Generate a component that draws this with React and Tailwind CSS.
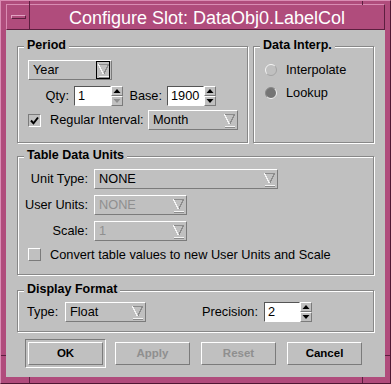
import React from 'react';

const raised = 'border border-t-white border-l-white border-r-[#7b7b7b] border-b-[#7b7b7b]';
const sunken = 'border border-t-[#7b7b7b] border-l-[#7b7b7b] border-r-white border-b-white';

function ComboGlyph() {
  return (
    <svg width="11" height="15" viewBox="0 0 11 15" shapeRendering="crispEdges">
      <path d="M0.5 1.5 H10.5 L5.5 11.5" stroke="#8c8c8c" fill="none" />
      <path d="M0.5 1.5 L5.5 11.5" stroke="#f4f4f4" fill="none" />
      <path d="M0.5 13.5 H10.5" stroke="#f4f4f4" />
      <path d="M0.5 14.5 H10.5" stroke="#8c8c8c" />
    </svg>
  );
}

function Combo({ width, value, disabled, focus }) {
  return (
    <div className={`flex h-[20px] items-center justify-between bg-[#c0c0c0] pl-[4px] pr-[1px] ${raised} ${width}`}>
      <span className={disabled ? 'text-[#8f8f8f]' : 'text-black'}>{value}</span>
      <span className={`flex h-[18px] w-[14px] items-center justify-center ${focus ? 'border border-black' : ''}`}>
        <ComboGlyph />
      </span>
    </div>
  );
}

function Arrow({ up, dim }) {
  return (
    <div className={`flex h-[10px] w-[12px] items-center justify-center ${raised}`}>
      <svg width="10" height="8" viewBox="0 0 10 8">
        <polygon points={up ? '1.5,6 5,2 8.5,6' : '1.5,2 8.5,2 5,6'} fill={dim ? '#8f8f8f' : '#000'} />
      </svg>
    </div>
  );
}

function Spin({ width, value, downDim }) {
  return (
    <div className="flex items-center">
      <div className={`flex h-[20px] items-center bg-white pl-[3px] ${sunken} border-t-[#555] border-l-[#555] ${width}`}>
        {value}
      </div>
      <div className="flex flex-col">
        <Arrow up />
        <Arrow dim={downDim} />
      </div>
    </div>
  );
}

function Check({ on }) {
  return (
    <div className={`flex h-[13px] w-[13px] shrink-0 items-center justify-center ${on ? sunken : raised}`}>
      {on && (
        <svg width="11" height="11" viewBox="0 0 11 11">
          <path d="M2 5.5 L4.5 8.3 L9 2.5" stroke="#000" strokeWidth="2" fill="none" />
        </svg>
      )}
    </div>
  );
}

function Radio({ on }) {
  return (
    <svg width="14" height="14" viewBox="0 0 14 14" className="shrink-0">
      <circle cx="7" cy="7" r="5.5" fill={on ? '#757575' : '#c0c0c0'} />
      <path d="M3.1 10.9 A5.5 5.5 0 0 1 10.9 3.1" stroke={on ? '#8a8a8a' : '#f4f4f4'} fill="none" />
      <path d="M10.9 3.1 A5.5 5.5 0 0 1 3.1 10.9" stroke={on ? '#f4f4f4' : '#a4a4a4'} fill="none" />
    </svg>
  );
}

function Group({ title, className, children }) {
  return (
    <div className={`relative border border-[#888888] shadow-[inset_1px_1px_0_#fff,1px_1px_0_#fff] ${className}`}>
      <span className="absolute left-[6px] top-[-9px] bg-[#c0c0c0] px-[3px] text-[12.5px] font-bold leading-[15px]">
        {title}
      </span>
      {children}
    </div>
  );
}

function Btn({ label, disabled }) {
  return (
    <div
      className={`flex h-[23px] w-[75px] items-center justify-center bg-[#c0c0c0] text-[11.5px] font-bold ${raised} ${
        disabled ? 'text-[#8f8f8f]' : 'text-black'
      }`}
    >
      {label}
    </div>
  );
}

export default function App() {
  return (
    <div className="relative flex h-[384px] w-[391px] flex-col border border-t-[#d98cb3] border-l-[#d98cb3] border-r-[#4f1733] border-b-[#4f1733] bg-[#b04c7c] pt-[3px] pl-[5px] pr-[5px] pb-[6px] font-['Liberation_Sans',Arial,sans-serif] text-[12.75px] text-black">
      {/* resize corner ticks */}
      <div className="absolute left-[28px] top-0 h-[4px] w-[1px] bg-[#5c1f3f]" />
      <div className="absolute left-[361px] top-0 h-[4px] w-[1px] bg-[#5c1f3f]" />
      <div className="absolute bottom-0 left-[28px] h-[6px] w-[1px] bg-[#5c1f3f]" />
      <div className="absolute bottom-0 left-[361px] h-[6px] w-[1px] bg-[#5c1f3f]" />
      <div className="absolute left-0 top-[354px] h-[1px] w-[5px] bg-[#5c1f3f]" />
      <div className="absolute right-0 top-[354px] h-[1px] w-[5px] bg-[#5c1f3f]" />

      {/* title bar */}
      <div className="flex h-[26px] border-t border-l border-b border-r border-t-[#d98cb3] border-l-[#d98cb3] border-b-[#5c1f3f] border-r-[#5c1f3f]">
        <div className="flex w-[23px] items-center justify-center border-r border-[#5c1f3f]">
          <div className="h-[4px] w-[15px] border border-t-[#e3a3c3] border-l-[#e3a3c3] border-r-[#5c1f3f] border-b-[#5c1f3f]" />
        </div>
        <div className="flex flex-1 items-center justify-center pt-[1px] text-[18px] leading-none text-white">
          Configure Slot: DataObj0.LabelCol
        </div>
      </div>

      {/* client area */}
      <div className="flex flex-1 flex-col bg-[#c0c0c0] px-[11px] pt-[16px]">
        <div className="flex gap-[5px]">
          <Group title="Period" className="h-[97px] w-[231px] pl-[10px] pt-[13px]">
            <Combo width="w-[84px]" value="Year" focus />
            <div className="mt-[6px] flex h-[20px] items-center">
              <span className="w-[46px] pr-[5px] text-right">Qty:</span>
              <Spin width="w-[37px]" value="1" downDim />
              <span className="w-[44px] pr-[5px] text-right">Base:</span>
              <Spin width="w-[37px]" value="1900" />
            </div>
            <div className="mt-[4px] flex h-[20px] items-center">
              <Check on />
              <span className="ml-[9px] w-[98px]">Regular Interval:</span>
              <Combo width="w-[90px]" value="Month" />
            </div>
          </Group>
          <Group title="Data Interp." className="h-[97px] w-[121px] pl-[10px] pt-[11px]">
            <div className="flex h-[23px] items-center gap-[8px]">
              <Radio />
              <span>Interpolate</span>
            </div>
            <div className="flex h-[23px] items-center gap-[8px]">
              <Radio on />
              <span>Lookup</span>
            </div>
          </Group>
        </div>

        <Group title="Table Data Units" className="mt-[13px] h-[119px] w-[357px] pt-[12px]">
          <div className="flex h-[20px] items-center">
            <span className="w-[76px] pr-[6px] text-right">Unit Type:</span>
            <Combo width="w-[184px]" value="NONE" />
          </div>
          <div className="mt-[6px] flex h-[20px] items-center">
            <span className="w-[76px] pr-[6px] text-right">User Units:</span>
            <Combo width="w-[93px]" value="NONE" disabled />
          </div>
          <div className="mt-[6px] flex h-[20px] items-center">
            <span className="w-[76px] pr-[6px] text-right">Scale:</span>
            <Combo width="w-[93px]" value="1" disabled />
          </div>
          <div className="mt-[7px] flex h-[13px] items-center pl-[10px]">
            <Check />
            <span className="ml-[9px]">Convert table values to new User Units and Scale</span>
          </div>
        </Group>

        <Group title="Display Format" className="mt-[15px] h-[42px] w-[357px] pl-[9px] pt-[11px]">
          <div className="flex h-[20px] items-center">
            <span className="w-[38px]">Type:</span>
            <Combo width="w-[81px]" value="Float" />
            <span className="w-[118px] pr-[6px] text-right">Precision:</span>
            <Spin width="w-[36px]" value="2" />
          </div>
        </Group>

        <div className="mt-[7px] flex items-center">
          <div className={`ml-[8px] p-[2px] ${sunken}`}>
            <Btn label="OK" />
          </div>
          <div className="ml-[9px]">
            <Btn label="Apply" disabled />
          </div>
          <div className="ml-[11px]">
            <Btn label="Reset" disabled />
          </div>
          <div className="ml-[11px]">
            <Btn label="Cancel" />
          </div>
        </div>
      </div>
    </div>
  );
}
